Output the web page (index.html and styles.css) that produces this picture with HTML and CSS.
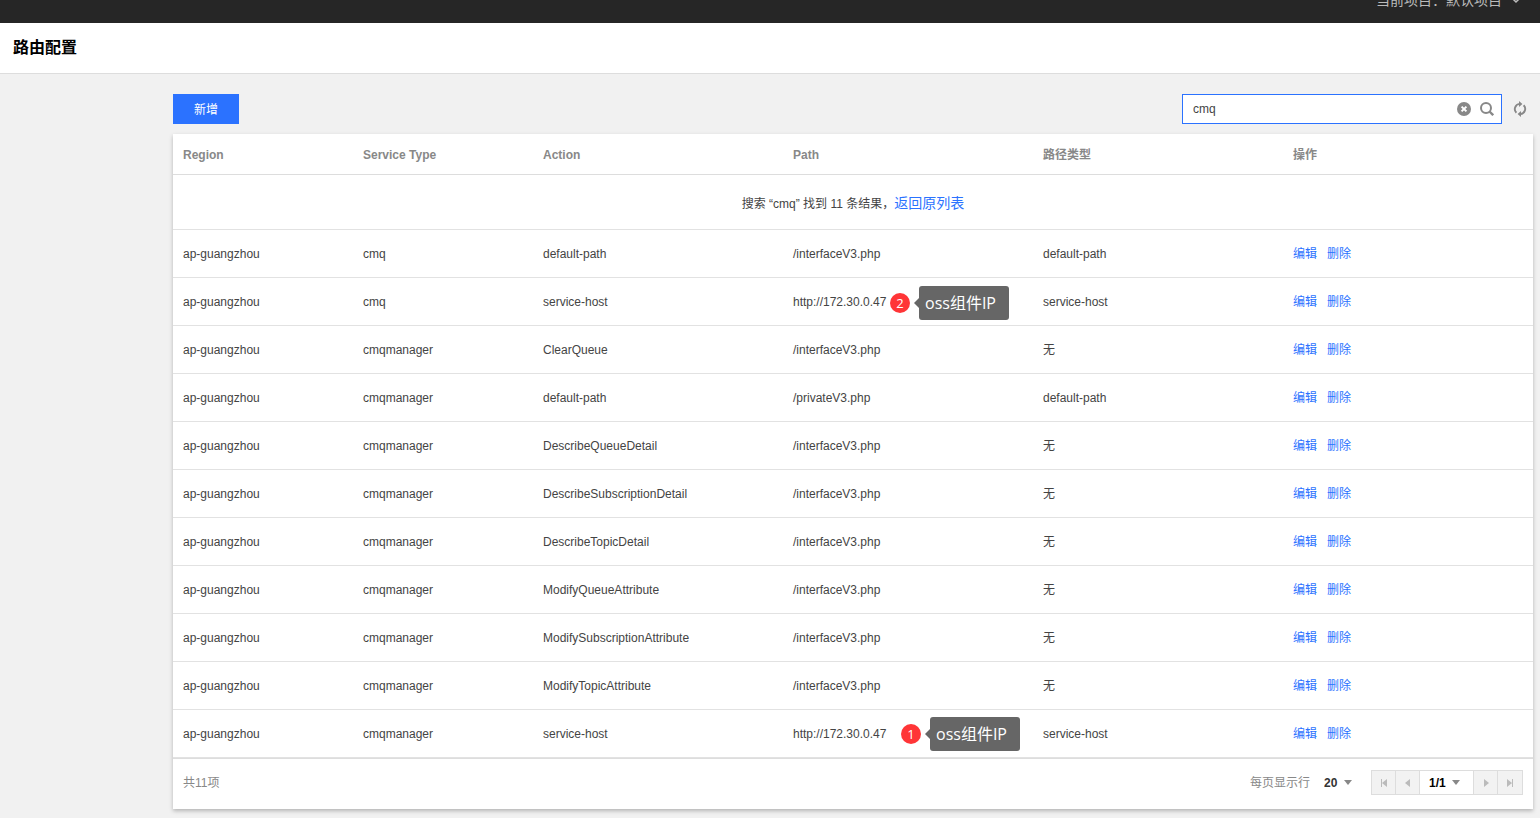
FILE: index.html
```html
<!DOCTYPE html>
<html lang="zh-CN">
<head>
<meta charset="utf-8">
<title>路由配置</title>
<link rel="stylesheet" href="styles.css">
</head>
<body>
<header class="topbar">
  <button class="project" type="button">当前项目：默认项目
    <svg class="chevron" width="8" height="8" viewBox="0 0 8 8"><path d="M1 3 4 6 7 3" fill="none" stroke="currentColor" stroke-width="1.5"/></svg>
  </button>
</header>
<div class="titlebar"><h1>路由配置</h1></div>
<main class="content">
  <div class="toolbar">
    <button class="add" type="button">新增</button>
    <div class="tools">
      <div class="search">
        <input type="text" value="cmq" aria-label="搜索">
        <button class="icon" type="button" aria-label="清除"><svg width="14" height="14" viewBox="0 0 14 14"><circle cx="7" cy="7" r="7" fill="#888"/><path d="M4.6 4.6 9.4 9.4M9.4 4.6 4.6 9.4" stroke="#fff" stroke-width="2"/></svg></button>
        <button class="icon" type="button" aria-label="查找"><svg width="14" height="14" viewBox="0 0 14 14"><circle cx="6" cy="6" r="5" fill="none" stroke="#888" stroke-width="2"/><path d="M9.5 9.5 13.2 13.2" stroke="#888" stroke-width="2.4"/></svg></button>
      </div>
      <button class="icon" type="button" aria-label="刷新"><svg width="14" height="16" viewBox="0 0 14 16"><path d="M3.4 11.8A5.2 5.2 0 0 1 6.6 2.9M10.6 4.2A5.2 5.2 0 0 1 7.4 13.1" fill="none" stroke="#888" stroke-width="1.9"/><path d="M6 0v6l3.4-3zM8 10v6l-3.4-3z" fill="#888"/></svg></button>
    </div>
  </div>
  <section class="panel">
    <table>
      <colgroup><col class="c-small"><col class="c-small"><col class="c-wide"><col class="c-wide"><col class="c-wide"><col class="c-wide"></colgroup>
      <thead><tr><th>Region</th><th>Service Type</th><th>Action</th><th>Path</th><th>路径类型</th><th>操作</th></tr></thead>
      <tbody>
        <tr class="result"><td colspan="6">搜索 “cmq” 找到 11 条结果，<a class="back" href="#">返回原列表</a></td></tr>
        <tr><td>ap-guangzhou</td><td>cmq</td><td>default-path</td><td>/interfaceV3.php</td><td>default-path</td><td><a href="#">编辑</a><a href="#">删除</a></td></tr>
        <tr><td>ap-guangzhou</td><td>cmq</td><td>service-host</td><td class="noted">http://172.30.0.47<div class="note note-near"><span class="num">2</span><span class="tip">oss组件IP</span></div></td><td>service-host</td><td><a href="#">编辑</a><a href="#">删除</a></td></tr>
        <tr><td>ap-guangzhou</td><td>cmqmanager</td><td>ClearQueue</td><td>/interfaceV3.php</td><td>无</td><td><a href="#">编辑</a><a href="#">删除</a></td></tr>
        <tr><td>ap-guangzhou</td><td>cmqmanager</td><td>default-path</td><td>/privateV3.php</td><td>default-path</td><td><a href="#">编辑</a><a href="#">删除</a></td></tr>
        <tr><td>ap-guangzhou</td><td>cmqmanager</td><td>DescribeQueueDetail</td><td>/interfaceV3.php</td><td>无</td><td><a href="#">编辑</a><a href="#">删除</a></td></tr>
        <tr><td>ap-guangzhou</td><td>cmqmanager</td><td>DescribeSubscriptionDetail</td><td>/interfaceV3.php</td><td>无</td><td><a href="#">编辑</a><a href="#">删除</a></td></tr>
        <tr><td>ap-guangzhou</td><td>cmqmanager</td><td>DescribeTopicDetail</td><td>/interfaceV3.php</td><td>无</td><td><a href="#">编辑</a><a href="#">删除</a></td></tr>
        <tr><td>ap-guangzhou</td><td>cmqmanager</td><td>ModifyQueueAttribute</td><td>/interfaceV3.php</td><td>无</td><td><a href="#">编辑</a><a href="#">删除</a></td></tr>
        <tr><td>ap-guangzhou</td><td>cmqmanager</td><td>ModifySubscriptionAttribute</td><td>/interfaceV3.php</td><td>无</td><td><a href="#">编辑</a><a href="#">删除</a></td></tr>
        <tr><td>ap-guangzhou</td><td>cmqmanager</td><td>ModifyTopicAttribute</td><td>/interfaceV3.php</td><td>无</td><td><a href="#">编辑</a><a href="#">删除</a></td></tr>
        <tr><td>ap-guangzhou</td><td>cmqmanager</td><td>service-host</td><td class="noted">http://172.30.0.47<div class="note note-far"><span class="num">1</span><span class="tip">oss组件IP</span></div></td><td>service-host</td><td><a href="#">编辑</a><a href="#">删除</a></td></tr>
      </tbody>
    </table>
    <footer class="footer">
      <span>共11项</span>
      <div class="paging">
        <label for="size">每页显示行</label>
        <span class="picker"><select id="size"><option>20</option></select><svg width="8" height="5" viewBox="0 0 8 5"><path d="M0 0h8L4 5z" fill="#888"/></svg></span>
        <nav class="pager" aria-label="分页">
          <button type="button" disabled aria-label="首页"><svg width="8" height="8" viewBox="0 0 8 8"><path d="M1 0h1v8H1zM7 0v8L2 4z" fill="#bbb"/></svg></button>
          <button type="button" disabled aria-label="上一页"><svg width="8" height="8" viewBox="0 0 8 8"><path d="M6 0v8L1 4z" fill="#bbb"/></svg></button>
          <span class="picker page"><select aria-label="页码"><option>1/1</option></select><svg width="8" height="5" viewBox="0 0 8 5"><path d="M0 0h8L4 5z" fill="#888"/></svg></span>
          <button type="button" disabled aria-label="下一页"><svg width="8" height="8" viewBox="0 0 8 8"><path d="M2 0v8l5-4z" fill="#bbb"/></svg></button>
          <button type="button" disabled aria-label="末页"><svg width="8" height="8" viewBox="0 0 8 8"><path d="M6 0h1v8H6zM1 0v8l5-4z" fill="#bbb"/></svg></button>
        </nav>
      </div>
    </footer>
  </section>
</main>
</body>
</html>
```
FILE: styles.css
```css
* { box-sizing: border-box; }
body {
  margin: 0;
  background: #f1f1f1;
  color: #444;
  font: 12px/18px "Liberation Sans", "Noto Sans CJK SC", sans-serif;
  overflow-x: hidden;
}
button, input, select { font: inherit; color: inherit; margin: 0; padding: 0; border: 0; background: none; }
a { color: #2b72ff; text-decoration: none; }
svg { display: block; flex: none; }

.topbar {
  display: flex;
  align-items: center;
  justify-content: flex-end;
  height: 46px;
  margin-top: -23px;
  padding-right: 20px;
  background: #262626;
}
.project { display: flex; align-items: center; gap: 10px; color: #bbb; font-size: 14px; }
.titlebar { padding: 12px 13px; background: #fff; border-bottom: 1px solid #ddd; }
.titlebar h1 { margin: 0; color: #000; font-size: 16px; line-height: 26px; font-weight: 700; }

.content { padding: 20px 7px 8px 173px; }
.toolbar { display: flex; justify-content: space-between; margin-bottom: 10px; }
.add { height: 30px; padding: 2px 21px 0; background: #2b72ff; color: #fff; }
.tools { display: flex; align-items: center; gap: 11px; padding-right: 6px; }
.search {
  display: flex;
  align-items: center;
  gap: 9px;
  width: 320px;
  height: 30px;
  padding: 0 7px 0 10px;
  background: #fff;
  border: 1px solid #2b72ff;
}
.search input { flex: 1; min-width: 0; outline: 0; }

.panel { background: #fff; box-shadow: 0 2px 4px rgba(0, 0, 0, .25); }
table { width: 100%; table-layout: fixed; border-collapse: separate; border-spacing: 0; }
.c-small { width: 180px; }
.c-wide { width: 250px; }
th, td { padding: 0 10px; text-align: left; border-bottom: 1px solid #e2e2e2; }
th { height: 41px; padding-top: 2px; color: #888; font-weight: 700; border-color: #ddd; }
td { height: 48px; }
td a + a { margin-left: 10px; }
.result td { height: 55px; padding-top: 2px; text-align: center; }
.back { font-size: 14px; }

.noted { position: relative; }
.note { position: absolute; top: 8px; display: flex; align-items: center; gap: 9px; white-space: nowrap; }
.note-near { left: 107px; }
.note-far { left: 118px; top: 7px; }
.num {
  width: 20px;
  border-radius: 10px;
  background: #ff3537;
  color: #fff;
  font: 13px/20px "Open Sans", sans-serif;
  text-align: center;
}
.tip {
  position: relative;
  padding: 0 13px 0 6px;
  border-radius: 3px;
  background: #666;
  color: #fff;
  font: 16px/34px "Open Sans", "Noto Sans CJK SC", sans-serif;
}
.tip::before {
  content: "";
  position: absolute;
  left: -5px;
  top: 12px;
  border: 5px solid transparent;
  border-left: 0;
  border-right-color: #666;
}

.footer {
  display: flex;
  align-items: center;
  justify-content: space-between;
  height: 51px;
  padding: 0 10px 3px;
  border-top: 1px solid #ddd;
  color: #888;
}
.paging { display: flex; align-items: center; }
.picker { display: flex; align-items: center; gap: 6px; color: #333; font-weight: 700; }
.picker select { appearance: none; outline: 0; }
label + .picker { margin: 0 19px 0 14px; }
.pager { display: flex; border: 1px solid #ddd; }
.pager button { display: flex; align-items: center; justify-content: center; width: 24px; height: 23px; background: #f2f2f2; border-right: 1px solid #ddd; }
.pager button:last-child { border-right: 0; }
.page { padding: 0 13px 0 9px; border-right: 1px solid #ddd; color: #000; }
```
